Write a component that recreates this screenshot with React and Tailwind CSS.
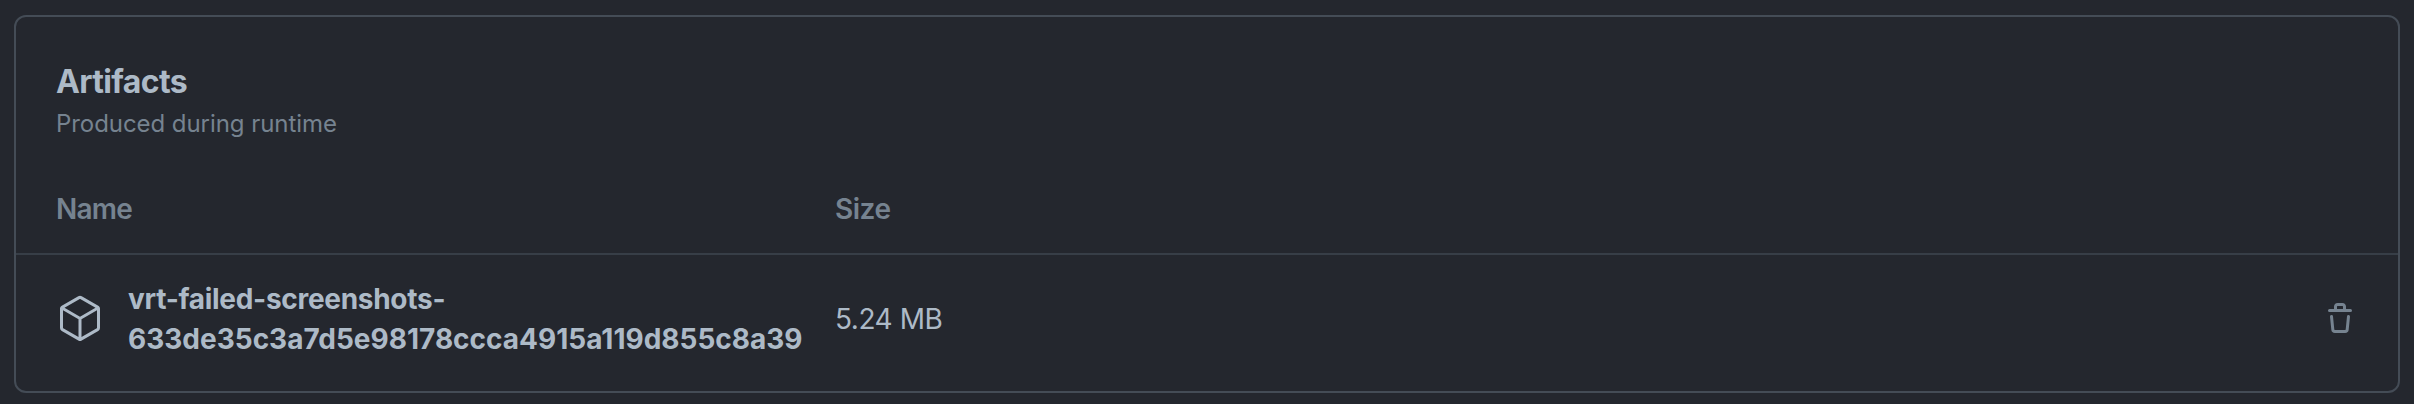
function PackageIcon() {
  return (
    <svg viewBox="0 0 24 24" className="size-12 shrink-0 fill-[#adbac7]" aria-hidden="true">
      <path d="M12.876.64V.639l8.25 4.763c.541.313.875.89.875 1.515v9.525a1.75 1.75 0 0 1-.875 1.516l-8.25 4.762a1.748 1.748 0 0 1-1.75 0l-8.25-4.763a1.75 1.75 0 0 1-.875-1.515V6.917c0-.625.334-1.202.875-1.515L11.126.64a1.748 1.748 0 0 1 1.75 0Zm-1 1.298L4.251 6.34l7.75 4.474 7.75-4.474-7.625-4.402a.248.248 0 0 0-.25 0Zm.875 19.123 7.625-4.402a.25.25 0 0 0 .125-.216V7.639l-7.75 4.474ZM3.501 7.64v8.803c0 .09.048.172.125.216l7.625 4.402v-8.947Z" />
    </svg>
  );
}

function TrashIcon() {
  return (
    <svg viewBox="0 0 16 16" className="size-8 fill-[#768390]" aria-hidden="true">
      <path d="M11 1.75V3h2.25a.75.75 0 0 1 0 1.5H2.75a.75.75 0 0 1 0-1.5H5V1.75C5 .784 5.784 0 6.75 0h2.5C10.216 0 11 .784 11 1.75ZM4.496 6.675l.66 6.6a.25.25 0 0 0 .249.225h5.19a.25.25 0 0 0 .249-.225l.66-6.6a.75.75 0 0 1 1.492.149l-.66 6.6A1.748 1.748 0 0 1 10.595 15h-5.19a1.75 1.75 0 0 1-1.741-1.575l-.66-6.6a.75.75 0 1 1 1.492-.15ZM6.5 1.75V3h3V1.75a.25.25 0 0 0-.25-.25h-2.5a.25.25 0 0 0-.25.25Z" />
    </svg>
  );
}

export default function App() {
  return (
    <main className="h-[404px] bg-[#24272e] px-3.5 pt-[15px] font-['Inter',sans-serif] text-[28px] leading-10 text-[#adbac7]">
      <section className="flex h-[378px] flex-col rounded-xl border-2 border-[#444c56]">
        <header className="px-10 pt-[41px]">
          <h2 className="text-[32px] leading-[47px] font-bold tracking-[-0.65px]">Artifacts</h2>
          <p className="text-2xl leading-[37px] tracking-[-0.06px] text-[#768390]">Produced during runtime</p>
        </header>
        <div className="mt-auto flex h-[91px] border-b-2 border-[#373e47] px-10 pt-[25px] font-semibold text-[#768390]">
          <div className="w-[779px] tracking-[-0.8px]">Name</div>
          <div className="tracking-[-0.5px]">Size</div>
        </div>
        <div className="flex h-[136px] items-center px-10 pb-[8px]">
          <div className="flex w-[779px] items-center gap-6">
            <PackageIcon />
            <div className="font-bold whitespace-nowrap">
              <div className="tracking-[-0.29px]">vrt-failed-screenshots-</div>
              <div>633de35c3a7d5e98178ccca4915a119d855c8a39</div>
            </div>
          </div>
          <div className="tracking-[-0.45px]">5.24 MB</div>
          <button className="mr-0.5 ml-auto" aria-label="Delete artifact"><TrashIcon /></button>
        </div>
      </section>
    </main>
  );
}
